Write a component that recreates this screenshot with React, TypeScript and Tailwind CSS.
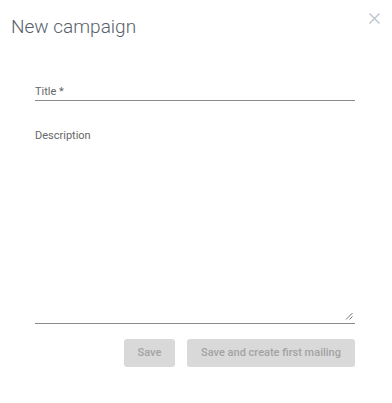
import React from 'react';

// Modal body for creating a campaign
const App: React.FC = () => {
  return (
    <div className="relative w-[392px] h-[403px] bg-white font-['Roboto',sans-serif] overflow-hidden">
      <button className="absolute left-[369px] top-[13px] w-[11px] h-[11px] text-[#bac4cd]" aria-label="Close">
        <svg viewBox="0 0 11 11" width="11" height="11" fill="none" stroke="currentColor" strokeWidth="1.4">
          <path d="M0.5 0.5 L10.5 10.5 M10.5 0.5 L0.5 10.5" />
        </svg>
      </button>

      <div className="pl-[11px] pt-[15px]">
        <h2 className="text-[19px] leading-[24px] font-light text-[#56606b]">New campaign</h2>
      </div>

      <form className="mx-[35px] mt-[46px] w-[320px]">
        <div className="h-[16px] border-b border-[#8a8a8a]">
          <label className="block text-[11px] leading-[13px] text-[#666]">Title *</label>
        </div>

        <div className="mt-[28px] relative h-[195px] border-b border-[#8a8a8a]">
          <label className="block text-[11px] leading-[13px] text-[#666]">Description</label>
          <svg className="absolute right-[2px] bottom-[3px]" width="8" height="8" viewBox="0 0 8 8" fill="none" stroke="#777" strokeWidth="1">
            <path d="M1 7.5 L7.5 1 M4.5 7.5 L7.5 4.5" />
          </svg>
        </div>

        <div className="mt-[15px] flex justify-end gap-[12px]">
          <button type="button" disabled className="w-[51px] h-[28px] rounded-[3px] bg-[#d9d9d9] text-[11px] font-medium text-[#a3a3a3]">
            Save
          </button>
          <button type="button" disabled className="w-[168px] h-[28px] rounded-[3px] bg-[#d9d9d9] text-[11px] font-medium text-[#a3a3a3]">
            Save and create first mailing
          </button>
        </div>
      </form>
    </div>
  );
};

export default App;
